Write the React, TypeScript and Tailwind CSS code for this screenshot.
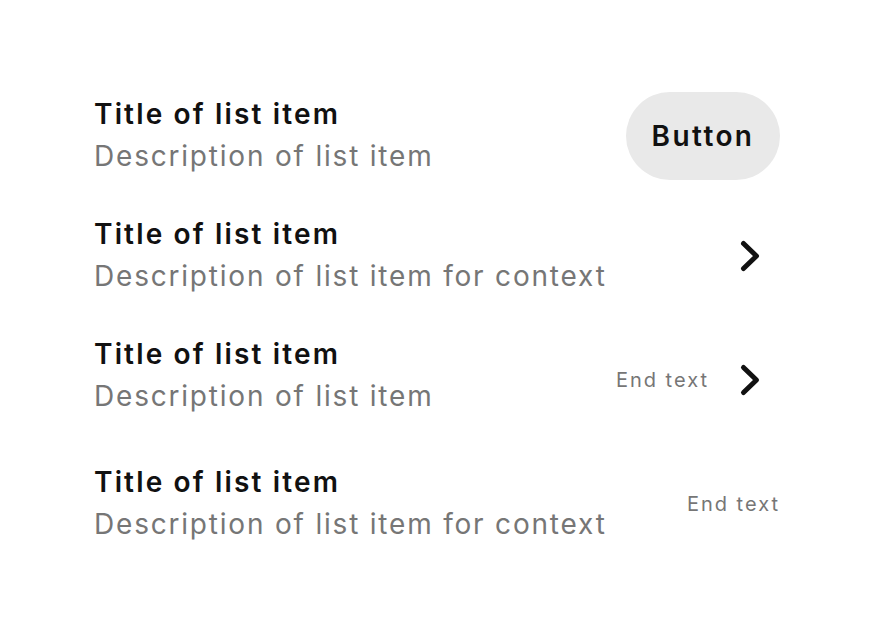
import React from "react";

function Chevron() {
  return (
    <svg width="20" height="32" viewBox="0 0 20 32" fill="none" aria-hidden="true" className="overflow-visible">
      <path d="M3.5 3.5 L16.5 16 L3.5 28.5" stroke="#111111" strokeWidth="5" strokeLinecap="round" strokeLinejoin="round" />
    </svg>
  );
}

function TextBlock({ desc }: { desc: string }) {
  return (
    <div className="flex flex-col -mt-[2px]">
      <div className="text-[28px] leading-[42px] font-semibold tracking-[2.15px] text-[#111111]">Title of list item</div>
      <div className="text-[28px] leading-[42px] tracking-[1.8px] text-[#767676]">{desc}</div>
    </div>
  );
}

export default function App() {
  return (
    <div className="w-[874px] h-[640px] bg-white pt-[92px] px-[94px]" style={{ fontFamily: "Inter, 'Noto Sans', sans-serif" }}>
      <div className="flex flex-col">
        <div className="flex items-center justify-between h-[88px]">
          <TextBlock desc="Description of list item" />
          <button className="h-[88px] w-[154px] rounded-full bg-[#e9e9e9] text-[28px] font-semibold tracking-[2.4px] text-[#111111]">Button</button>
        </div>
        <div className="flex items-center justify-between h-[88px] mt-[32px]">
          <TextBlock desc="Description of list item for context" />
          <div className="mr-[20px] flex"><Chevron /></div>
        </div>
        <div className="flex items-center justify-between h-[88px] mt-[32px]">
          <TextBlock desc="Description of list item" />
          <div className="flex items-center gap-[31px] mr-[20px] mt-[8px]">
            <span className="text-[20px] tracking-[2px] text-[#767676]">End text</span>
            <Chevron />
          </div>
        </div>
        <div className="flex items-center justify-between h-[88px] mt-[40px]">
          <TextBlock desc="Description of list item for context" />
          <span className="text-[20px] tracking-[2px] text-[#767676]">End text</span>
        </div>
      </div>
    </div>
  );
}
